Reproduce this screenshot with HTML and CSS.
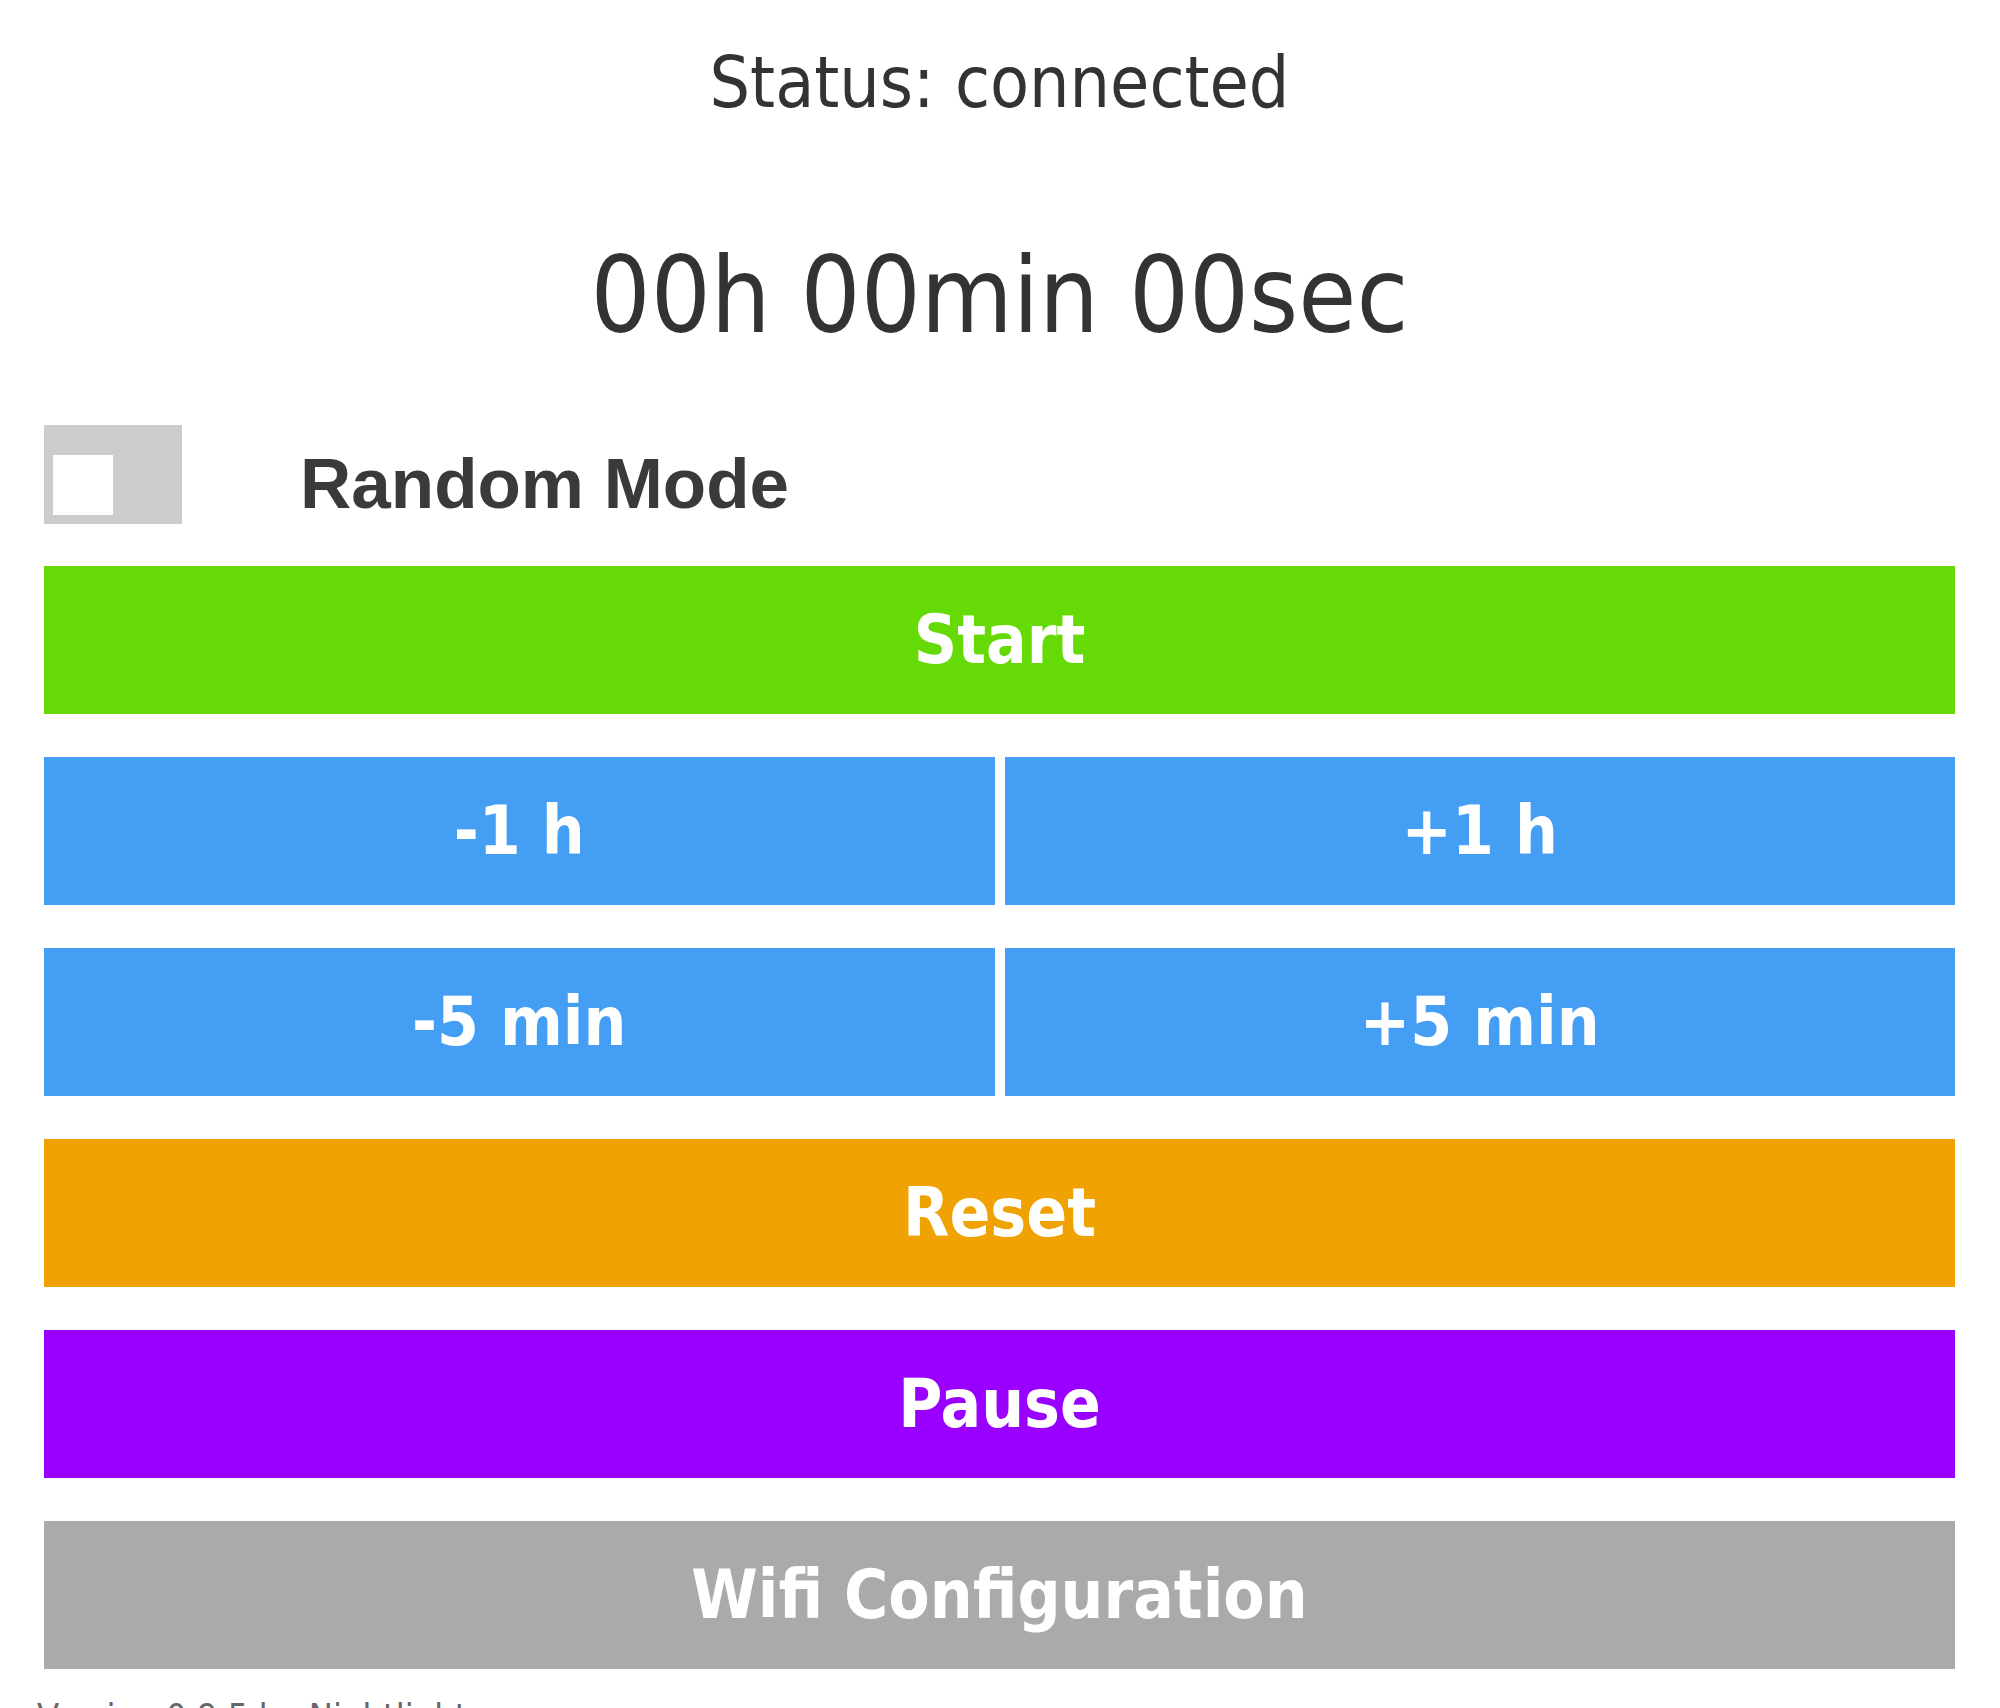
FILE: index.html
```html
<!DOCTYPE html>
<html lang="en">
<head>
  <meta charset="UTF-8">
  <title>Timer</title>
  <link rel="stylesheet" href="styles.css">
</head>
<body>
<div class="page">
  <div class="status" id="status">Status: connected</div>
  <div class="timer" id="timer">00h 00min 00sec</div>

  <div class="mode-row">
    <label class="switch">
      <input type="checkbox" id="randomMode">
      <span class="slider"></span>
    </label>
    <span class="mode-label">Random Mode</span>
  </div>

  <button class="btn btn-start" id="btnStart">Start</button>

  <div class="btn-pair">
    <button class="btn btn-adjust">-1 h</button>
    <button class="btn btn-adjust">+1 h</button>
  </div>

  <div class="btn-pair">
    <button class="btn btn-adjust">-5 min</button>
    <button class="btn btn-adjust">+5 min</button>
  </div>

  <button class="btn btn-reset">Reset</button>
  <button class="btn btn-pause">Pause</button>
  <button class="btn btn-wifi">Wifi Configuration</button>

  <div class="footer">Version 0.9.5 by Nightlight</div>
</div>
</body>
</html>
```

FILE: styles.css
```css
body {
  margin: 0;
  padding: 0;
  background-color: #fff;
  color: #333;
  font-family: "DejaVu Sans Condensed", "DejaVu Sans", Verdana, sans-serif;
}

.page {
  display: flex;
  flex-direction: column;
  padding: 41px 45px 0 44px;
}

.status {
  text-align: center;
  font-size: 71px;
  line-height: 83px;
  color: #333;
}

.timer {
  text-align: center;
  font-size: 105px;
  line-height: 122px;
  margin-top: 111px;
  color: #333;
}

.mode-row {
  display: flex;
  align-items: flex-end;
  margin-top: 68px;
}

.switch {
  position: relative;
  display: inline-block;
  width: 138px;
  height: 99px;
  flex-shrink: 0;
}

.switch input {
  opacity: 0;
  width: 0;
  height: 0;
}

.slider {
  position: absolute;
  inset: 0;
  background-color: #ccc;
  cursor: pointer;
}

.slider:before {
  content: "";
  position: absolute;
  left: 9px;
  bottom: 9px;
  width: 60px;
  height: 60px;
  background-color: #fff;
}

.mode-label {
  margin-left: 118px;
  font-family: "Liberation Sans", Arial, sans-serif;
  font-weight: bold;
  font-size: 71px;
  line-height: 82px;
  color: #3a3a3a;
  margin-bottom: -1px;
}

.btn {
  display: block;
  width: 100%;
  height: 148px;
  margin-top: 43px;
  border: none;
  padding: 0;
  color: #fff;
  font-family: "DejaVu Sans Condensed", "DejaVu Sans", Verdana, sans-serif;
  font-weight: bold;
  font-size: 67px;
  cursor: pointer;
}

.btn-start {
  margin-top: 42px;
  background-color: #66da06;
}

.btn-pair {
  display: grid;
  grid-template-columns: 1fr 1fr;
  gap: 10px;
  margin-top: 43px;
}

.btn-pair .btn {
  margin-top: 0;
}

.btn-adjust {
  background-color: #439ef4;
}

.btn-reset {
  background-color: #f0a202;
}

.btn-pause {
  background-color: #9900ff;
}

.btn-wifi {
  background-color: #aaaaaa;
}

.footer {
  margin-top: 27px;
  margin-left: -7px;
  font-size: 36px;
  color: #666;
}
```
